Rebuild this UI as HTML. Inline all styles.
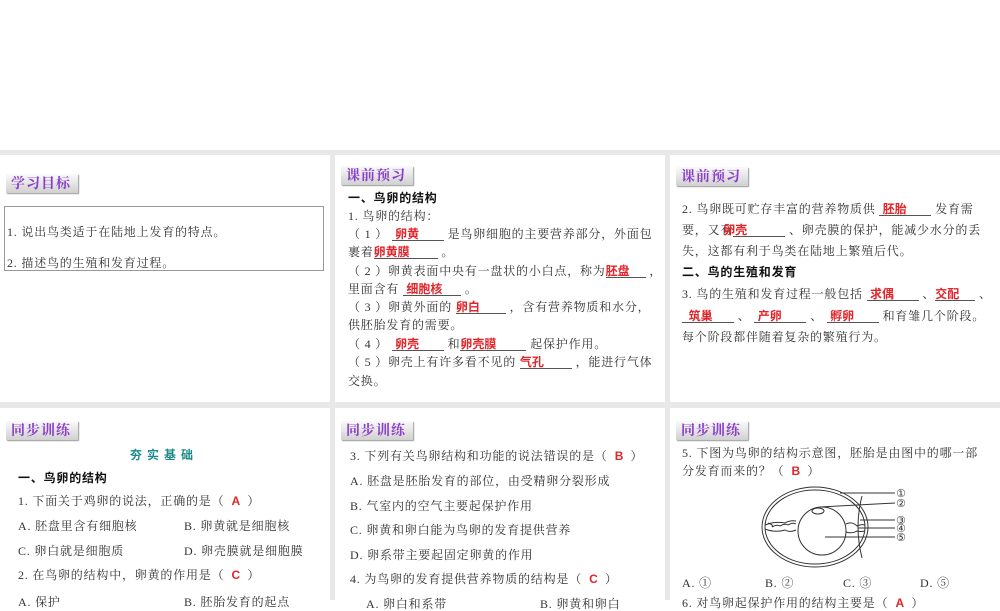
<!DOCTYPE html>
<html><head><meta charset="utf-8"><style>
*{margin:0;padding:0;box-sizing:border-box}
body{width:1000px;height:600px;overflow:hidden;background:#fff;position:relative;font-family:"Liberation Serif","Noto Serif CJK SC",serif;font-size:12px;color:#333}
.bg{position:absolute;left:0;top:150px;width:1000px;height:450px;background:#e8e8e8}
.p{position:absolute;background:#fff}
.b{position:absolute;width:72px;height:19px;background:linear-gradient(#fafafa,#d0d0d0);box-shadow:1px 1px 1px #999;color:#8a3fc9;font-weight:bold;font-size:14px;line-height:19px;padding-left:5px;letter-spacing:1px;font-family:"Noto Serif CJK SC",serif}
.t{position:absolute;white-space:nowrap;line-height:14px;letter-spacing:0.8px}
.r{color:#e0262b;font-family:"Liberation Sans","Noto Sans CJK SC",sans-serif;font-weight:bold;letter-spacing:0}
.u{display:inline-block;border-bottom:1px solid #555;line-height:12px;vertical-align:baseline}
.h{font-weight:bold;font-family:"Liberation Sans","Noto Sans CJK SC",sans-serif;color:#111}
</style></head><body>
<div class="bg"></div>
<div class="p" style="left:0;top:155px;width:330px;height:247px"></div>
<div class="p" style="left:335px;top:155px;width:330px;height:247px"></div>
<div class="p" style="left:670px;top:155px;width:330px;height:247px"></div>
<div class="p" style="left:0;top:408px;width:330px;height:192px"></div>
<div class="p" style="left:335px;top:408px;width:330px;height:192px"></div>
<div class="p" style="left:670px;top:408px;width:330px;height:192px"></div>

<div class="b" style="left:6px;top:174px">学习目标</div>
<div style="position:absolute;left:4px;top:206px;width:320px;height:65px;border:1px solid #999"></div>
<div class="t" style="left:7px;top:225px">1. 说出鸟类适于在陆地上发育的特点。</div>
<div class="t" style="left:7px;top:256px">2. 描述鸟的生殖和发育过程。</div>

<div class="b" style="left:341px;top:166px">课前预习</div>
<div class="t h" style="left:348px;top:191px">一、鸟卵的结构</div>
<div class="t" style="left:348px;top:209px">1. 鸟卵的结构：</div>
<div class="t" style="left:348px;top:227px">（ 1 ） <span class="u" style="width:52px"><span class="r">&nbsp;卵黄</span></span> 是鸟卵细胞的主要营养部分，外面包</div>
<div class="t" style="left:348px;top:245px">裹着<span class="u" style="width:64px"><span class="r">卵黄膜</span></span> 。</div>
<div class="t" style="left:348px;top:264px">（ 2 ）卵黄表面中央有一盘状的小白点，称为<span class="u" style="width:40px"><span class="r">胚盘</span></span> ，</div>
<div class="t" style="left:348px;top:282px">里面含有 <span class="u" style="width:58px"><span class="r">&nbsp;细胞核</span></span> 。</div>
<div class="t" style="left:348px;top:300px">（ 3 ）卵黄外面的 <span class="u" style="width:50px"><span class="r">卵白</span></span> ，含有营养物质和水分，</div>
<div class="t" style="left:348px;top:318px">供胚胎发育的需要。</div>
<div class="t" style="left:348px;top:337px">（ 4 ） <span class="u" style="width:52px"><span class="r">&nbsp;卵壳</span></span> 和<span class="u" style="width:66px"><span class="r">卵壳膜</span></span> 起保护作用。</div>
<div class="t" style="left:348px;top:355px">（ 5 ）卵壳上有许多看不见的 <span class="u" style="width:52px"><span class="r">气孔</span></span> ，能进行气体</div>
<div class="t" style="left:348px;top:374px">交换。</div>

<div class="b" style="left:676px;top:167px">课前预习</div>
<div class="t" style="left:682px;top:202px">2. 鸟卵既可贮存丰富的营养物质供 <span class="u" style="width:52px"><span class="r">&nbsp;胚胎</span></span> 发育需</div>
<div class="t" style="left:682px;top:223px">要，又有<span class="u" style="width:52px"><span class="r" style="margin-left:-10px">卵壳</span></span> 、卵壳膜的保护，能减少水分的丢</div>
<div class="t" style="left:682px;top:244px">失，这都有利于鸟类在陆地上繁殖后代。</div>
<div class="t h" style="left:682px;top:265px">二、鸟的生殖和发育</div>
<div class="t" style="left:682px;top:287px">3. 鸟的生殖和发育过程一般包括 <span class="u" style="width:52px"><span class="r">&nbsp;求偶</span></span> 、<span class="u" style="width:40px"><span class="r">交配</span></span> 、</div>
<div class="t" style="left:682px;top:309px"><span class="u" style="width:52px"><span class="r">&nbsp;&nbsp;筑巢</span></span> 、 <span class="u" style="width:52px"><span class="r">&nbsp;产卵</span></span> 、 <span class="u" style="width:52px"><span class="r">&nbsp;孵卵</span></span> 和育雏几个阶段。</div>
<div class="t" style="left:682px;top:330px">每个阶段都伴随着复杂的繁殖行为。</div>

<div class="b" style="left:6px;top:421px">同步训练</div>
<div class="t h" style="left:130px;top:448px;color:#1a8a8a;letter-spacing:5px">夯实基础</div>
<div class="t h" style="left:18px;top:471px">一、鸟卵的结构</div>
<div class="t" style="left:18px;top:494px">1. 下面关于鸡卵的说法，正确的是（ <span class="r">&nbsp;A&nbsp;</span> ）</div>
<div class="t" style="left:18px;top:519px">A. 胚盘里含有细胞核</div>
<div class="t" style="left:184px;top:519px">B. 卵黄就是细胞核</div>
<div class="t" style="left:18px;top:544px">C. 卵白就是细胞质</div>
<div class="t" style="left:184px;top:544px">D. 卵壳膜就是细胞膜</div>
<div class="t" style="left:18px;top:568px">2. 在鸟卵的结构中，卵黄的作用是（ <span class="r">&nbsp;C&nbsp;</span> ）</div>
<div class="t" style="left:18px;top:595px">A. 保护</div>
<div class="t" style="left:184px;top:595px">B. 胚胎发育的起点</div>

<div class="b" style="left:341px;top:421px">同步训练</div>
<div class="t" style="left:350px;top:449px">3. 下列有关鸟卵结构和功能的说法错误的是（ <span class="r">&nbsp;B&nbsp;</span> ）</div>
<div class="t" style="left:350px;top:474px">A. 胚盘是胚胎发育的部位，由受精卵分裂形成</div>
<div class="t" style="left:350px;top:499px">B. 气室内的空气主要起保护作用</div>
<div class="t" style="left:350px;top:523px">C. 卵黄和卵白能为鸟卵的发育提供营养</div>
<div class="t" style="left:350px;top:548px">D. 卵系带主要起固定卵黄的作用</div>
<div class="t" style="left:350px;top:572px">4. 为鸟卵的发育提供营养物质的结构是（ <span class="r">&nbsp;C&nbsp;</span> ）</div>
<div class="t" style="left:366px;top:597px">A. 卵白和系带</div>
<div class="t" style="left:540px;top:597px">B. 卵黄和卵白</div>

<div class="b" style="left:676px;top:421px">同步训练</div>
<div class="t" style="left:682px;top:446px">5. 下图为鸟卵的结构示意图，胚胎是由图中的哪一部</div>
<div class="t" style="left:682px;top:464px">分发育而来的？（ <span class="r">&nbsp;B&nbsp;</span> ）</div>
<svg style="position:absolute;left:750px;top:480px" width="170" height="95" viewBox="0 0 170 95">
<g fill="none" stroke="#333" stroke-width="1">
<ellipse cx="65" cy="47" rx="53" ry="40"/>
<ellipse cx="65" cy="47" rx="50" ry="37"/>
<circle cx="72" cy="51" r="24"/>
<ellipse cx="68" cy="31" rx="6" ry="3"/>
<path d="M15 45 q10 -4 20 -2 q5 -3 11 -2"/><path d="M15 49 q10 4 20 1 q5 3 11 0"/>
<path d="M18 43 q6 2 4 4 q5-3 8-1 q5-3 8-1 q5-3 8-1"/>
<path d="M96 44 q6-3 11 2 q4-2 8-1"/><path d="M96 52 q6 2 11-1 q4 1 8 0"/>
<path d="M112 16 q-8 30 0 62"/>
<path d="M90 13 L145 13"/><path d="M70 27 L145 23"/><path d="M110 40 L145 40"/><path d="M108 48 L145 48"/><path d="M75 57 L145 57"/>
</g>
<g font-size="11" fill="#333" font-family="DejaVu Sans">
<text x="146" y="17">①</text><text x="146" y="27">②</text><text x="146" y="44">③</text><text x="146" y="52">④</text><text x="146" y="61">⑤</text>
</g></svg>
<div class="t" style="left:682px;top:576px">A. ①</div>
<div class="t" style="left:765px;top:576px">B. ②</div>
<div class="t" style="left:843px;top:576px">C. ③</div>
<div class="t" style="left:920px;top:576px">D. ⑤</div>
<div class="t" style="left:682px;top:596px">6. 对鸟卵起保护作用的结构主要是（ <span class="r">&nbsp;A&nbsp;</span> ）</div>
</body></html>
